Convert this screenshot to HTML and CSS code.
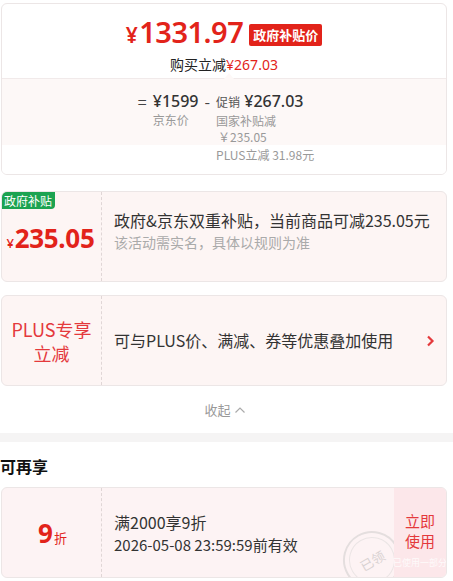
FILE: index.html
```
<!DOCTYPE html>
<html lang="zh">
<head>
<meta charset="utf-8">
<link rel="stylesheet" href="styles.css">
</head>
<body>
<div class="wrap">
  <section class="card price-card">
    <div class="price-top">
      <div class="price-row">
        <span class="big-price"><span class="yen">¥</span>1331.97</span>
        <span class="gov-tag">政府补贴价</span>
      </div>
      <div class="save-line">购买立减<span class="red">¥267.03</span></div>
    </div>
    <div class="breakdown">
      <div class="bd-group">
        <span class="op">=</span>
        <div class="bd-col">
          <div class="bd-amt">¥1599</div>
          <div class="bd-note">京东价</div>
        </div>
        <span class="op minus">-</span>
        <div class="bd-col">
          <div class="bd-amt"><span class="bd-small">促销</span> ¥267.03</div>
          <div class="bd-note">国家补贴减</div>
          <div class="bd-note indent">￥235.05</div>
          <div class="bd-note gap">PLUS立减 31.98元</div>
        </div>
      </div>
    </div>
  </section>

  <section class="card promo promo-gov">
    <span class="green-tag">政府补贴</span>
    <div class="promo-left">
      <span class="sub-amt"><span class="yen-s">¥</span>235.05</span>
    </div>
    <div class="promo-main">
      <div class="promo-title">政府&amp;京东双重补贴，当前商品可减235.05元</div>
      <div class="promo-desc">该活动需实名，具体以规则为准</div>
    </div>
  </section>

  <section class="card promo promo-plus">
    <div class="promo-left">
      <span class="plus-label">PLUS专享<br>立减</span>
    </div>
    <div class="promo-main row">
      <div class="promo-title">可与PLUS价、满减、券等优惠叠加使用</div>
      <svg class="chev" width="9" height="12" viewBox="0 0 9 12"><path d="M2 1.5 L6.5 6 L2 10.5" fill="none" stroke="#e4393c" stroke-width="2.2"/></svg>
    </div>
  </section>

  <div class="collapse">收起 <svg width="12" height="8" viewBox="0 0 12 8"><path d="M1.5 6.5 L6 2 L10.5 6.5" fill="none" stroke="#aaa" stroke-width="1.2"/></svg></div>
</div>

<div class="band"></div>

<div class="wrap">
  <h2 class="section-title">可再享</h2>
  <section class="card promo coupon">
    <div class="promo-left">
      <span class="disc"><b>9</b>折</span>
    </div>
    <div class="promo-main">
      <div class="promo-title">满2000享9折</div>
      <div class="coupon-date">2026-05-08 23:59:59前有效</div>
    </div>
    <div class="stamp"><span>已领</span></div>
    <div class="use-btn">
      <span>立即<br>使用</span>
      <span class="used-note">已使用一部分</span>
    </div>
  </section>
</div>
</body>
</html>
```
FILE: styles.css
```
* { box-sizing: border-box; }
body {
  margin: 0;
  background: #fff;
  font-family: "Noto Sans CJK SC", "Noto Sans", sans-serif;
  color: #333;
}
.wrap { padding: 3px 6px 0 1px; }
.card {
  border: 1px solid #ece6e6;
  border-radius: 6px;
  overflow: hidden;
}
.red { color: #e2231a; }

.price-card { background: #fff; }
.price-top {
  height: 75px;
  padding-top: 10px;
  display: flex;
  flex-direction: column;
  align-items: center;
  border-bottom: 1px solid #f1eaea;
  position: relative;
}
.price-top::after {
  content: "";
  position: absolute;
  left: 222px;
  bottom: -1px;
  width: 10px;
  height: 6px;
  background: #fdf8f7;
  clip-path: polygon(0 100%, 50% 0, 100% 100%);
}
.price-row { display: flex; align-items: center; height: 38px; gap: 6px; }
.big-price {
  font-family: "Noto Sans", sans-serif;
  font-size: 29px;
  font-weight: 600;
  color: #e2231a;
  letter-spacing: -0.5px;
  line-height: 38px;
}
.yen { font-size: 21px; margin-right: 2px; }
.gov-tag {
  background: #e2231a;
  color: #fff;
  font-size: 13px;
  font-weight: 700;
  padding: 0 4px;
  height: 22px;
  line-height: 22px;
  border-radius: 2px;
  margin-top: 3px;
}
.save-line { font-size: 14px; line-height: 20px; margin-top: 2px; color: #222; }
.save-line .red { font-family: "Noto Sans", sans-serif; }

.breakdown {
  background: linear-gradient(#fdf8f7 0, #fdf8f7 66px, #fff 66px);
  padding: 11px 0 11px;
}
.bd-group { display: flex; justify-content: center; padding-left: 4px; }
.op { font-size: 16px; line-height: 22px; color: #444; margin-right: 6px; }
.op.minus { margin: 0 6px 0 6px; }
.bd-col { display: flex; flex-direction: column; }
.bd-amt {
  font-family: "Noto Sans", sans-serif;
  font-size: 16px;
  font-weight: 500;
  line-height: 22px;
  color: #333;
}
.bd-small { font-family: "Noto Sans CJK SC", sans-serif; font-size: 12px; color: #555; font-weight: 400; }
.bd-note { font-size: 12px; line-height: 16px; color: #999; }
.bd-note:first-of-type { margin-top: 1px; }
.bd-note.indent { padding-left: 2px; }
.bd-note.gap { margin-top: 2px; }

.promo {
  position: relative;
  display: flex;
  height: 91px;
  background: #fdf5f4;
  margin-top: 16px;
}
.promo-plus { margin-top: 13px; }
.promo-left {
  width: 100px;
  flex: none;
  border-right: 1px dashed #e0d6d6;
  display: flex;
  align-items: center;
  justify-content: center;
}
.promo-main {
  flex: 1;
  padding-left: 12px;
  display: flex;
  flex-direction: column;
  justify-content: center;
}
.promo-main.row { flex-direction: row; align-items: center; justify-content: space-between; padding-right: 9px; }
.promo-title { font-size: 16px; line-height: 23px; color: #333; white-space: nowrap; }
.promo-desc { font-size: 14px; line-height: 20px; color: #aaa; margin-bottom: 2px; }
.promo-gov .promo-main { padding-bottom: 10px; }
.promo-gov .promo-left { padding-top: 2px; }
.green-tag {
  position: absolute;
  left: 0;
  top: 0;
  background: #1ca351;
  color: #fff;
  font-size: 12px;
  line-height: 17px;
  padding: 0 3px 0 2px;
  border-radius: 0 0 4px 0;
}
.sub-amt {
  font-family: "Noto Sans", sans-serif;
  font-weight: 700;
  font-size: 26px;
  color: #e2231a;
  letter-spacing: -0.3px;
  margin-right: 2px;
}
.yen-s { font-size: 13px; font-weight: 500; margin-right: 1px; }
.plus-label { font-size: 18px; line-height: 24px; color: #e4393c; text-align: center; }
.chev { margin-right: 2px; }

.collapse {
  height: 47px;
  display: flex;
  align-items: center;
  justify-content: center;
  gap: 3px;
  font-size: 13px;
  color: #999;
  padding-left: 2px;
}
.band { height: 9px; background: #f5f4f4; }
.wrap + .band + .wrap { padding-top: 0; }
.section-title {
  margin: 0;
  padding: 12px 0 0 0;
  font-size: 16px;
  font-weight: 700;
  line-height: 24px;
  color: #111;
  margin-left: -1px;
}
.coupon { margin-top: 9px; height: 91px; background: #fdf3f4; }
.disc { color: #e2231a; font-size: 13px; padding-left: 2px; }
.disc b { font-family: "Noto Sans", sans-serif; font-size: 26px; font-weight: 700; margin-right: 1px; }
.coupon .promo-main { padding-top: 2px; }
.coupon-date { font-size: 15px; line-height: 22px; color: #333; }
.use-btn {
  width: 52px;
  flex: none;
  background: #fce7ea;
  display: flex;
  flex-direction: column;
  align-items: center;
  justify-content: center;
  font-size: 15px;
  line-height: 20px;
  color: #e4393c;
  position: relative;
  padding-bottom: 4px;
}
.used-note {
  position: absolute;
  bottom: 4px;
  font-size: 9px;
  color: #fff;
  opacity: 0.8;
  white-space: nowrap;
}
.stamp {
  position: absolute;
  right: 45px;
  bottom: -12px;
  width: 58px;
  height: 58px;
  border: 2px solid #e4dede;
  border-radius: 50%;
  display: flex;
  align-items: center;
  justify-content: center;
  transform: rotate(-30deg);
}
.stamp span { font-size: 13px; color: #d9d2d2; }
.stamp::before {
  content: "";
  position: absolute;
  inset: 4px;
  border: 1px solid #ebe5e5;
  border-radius: 50%;
}
```
